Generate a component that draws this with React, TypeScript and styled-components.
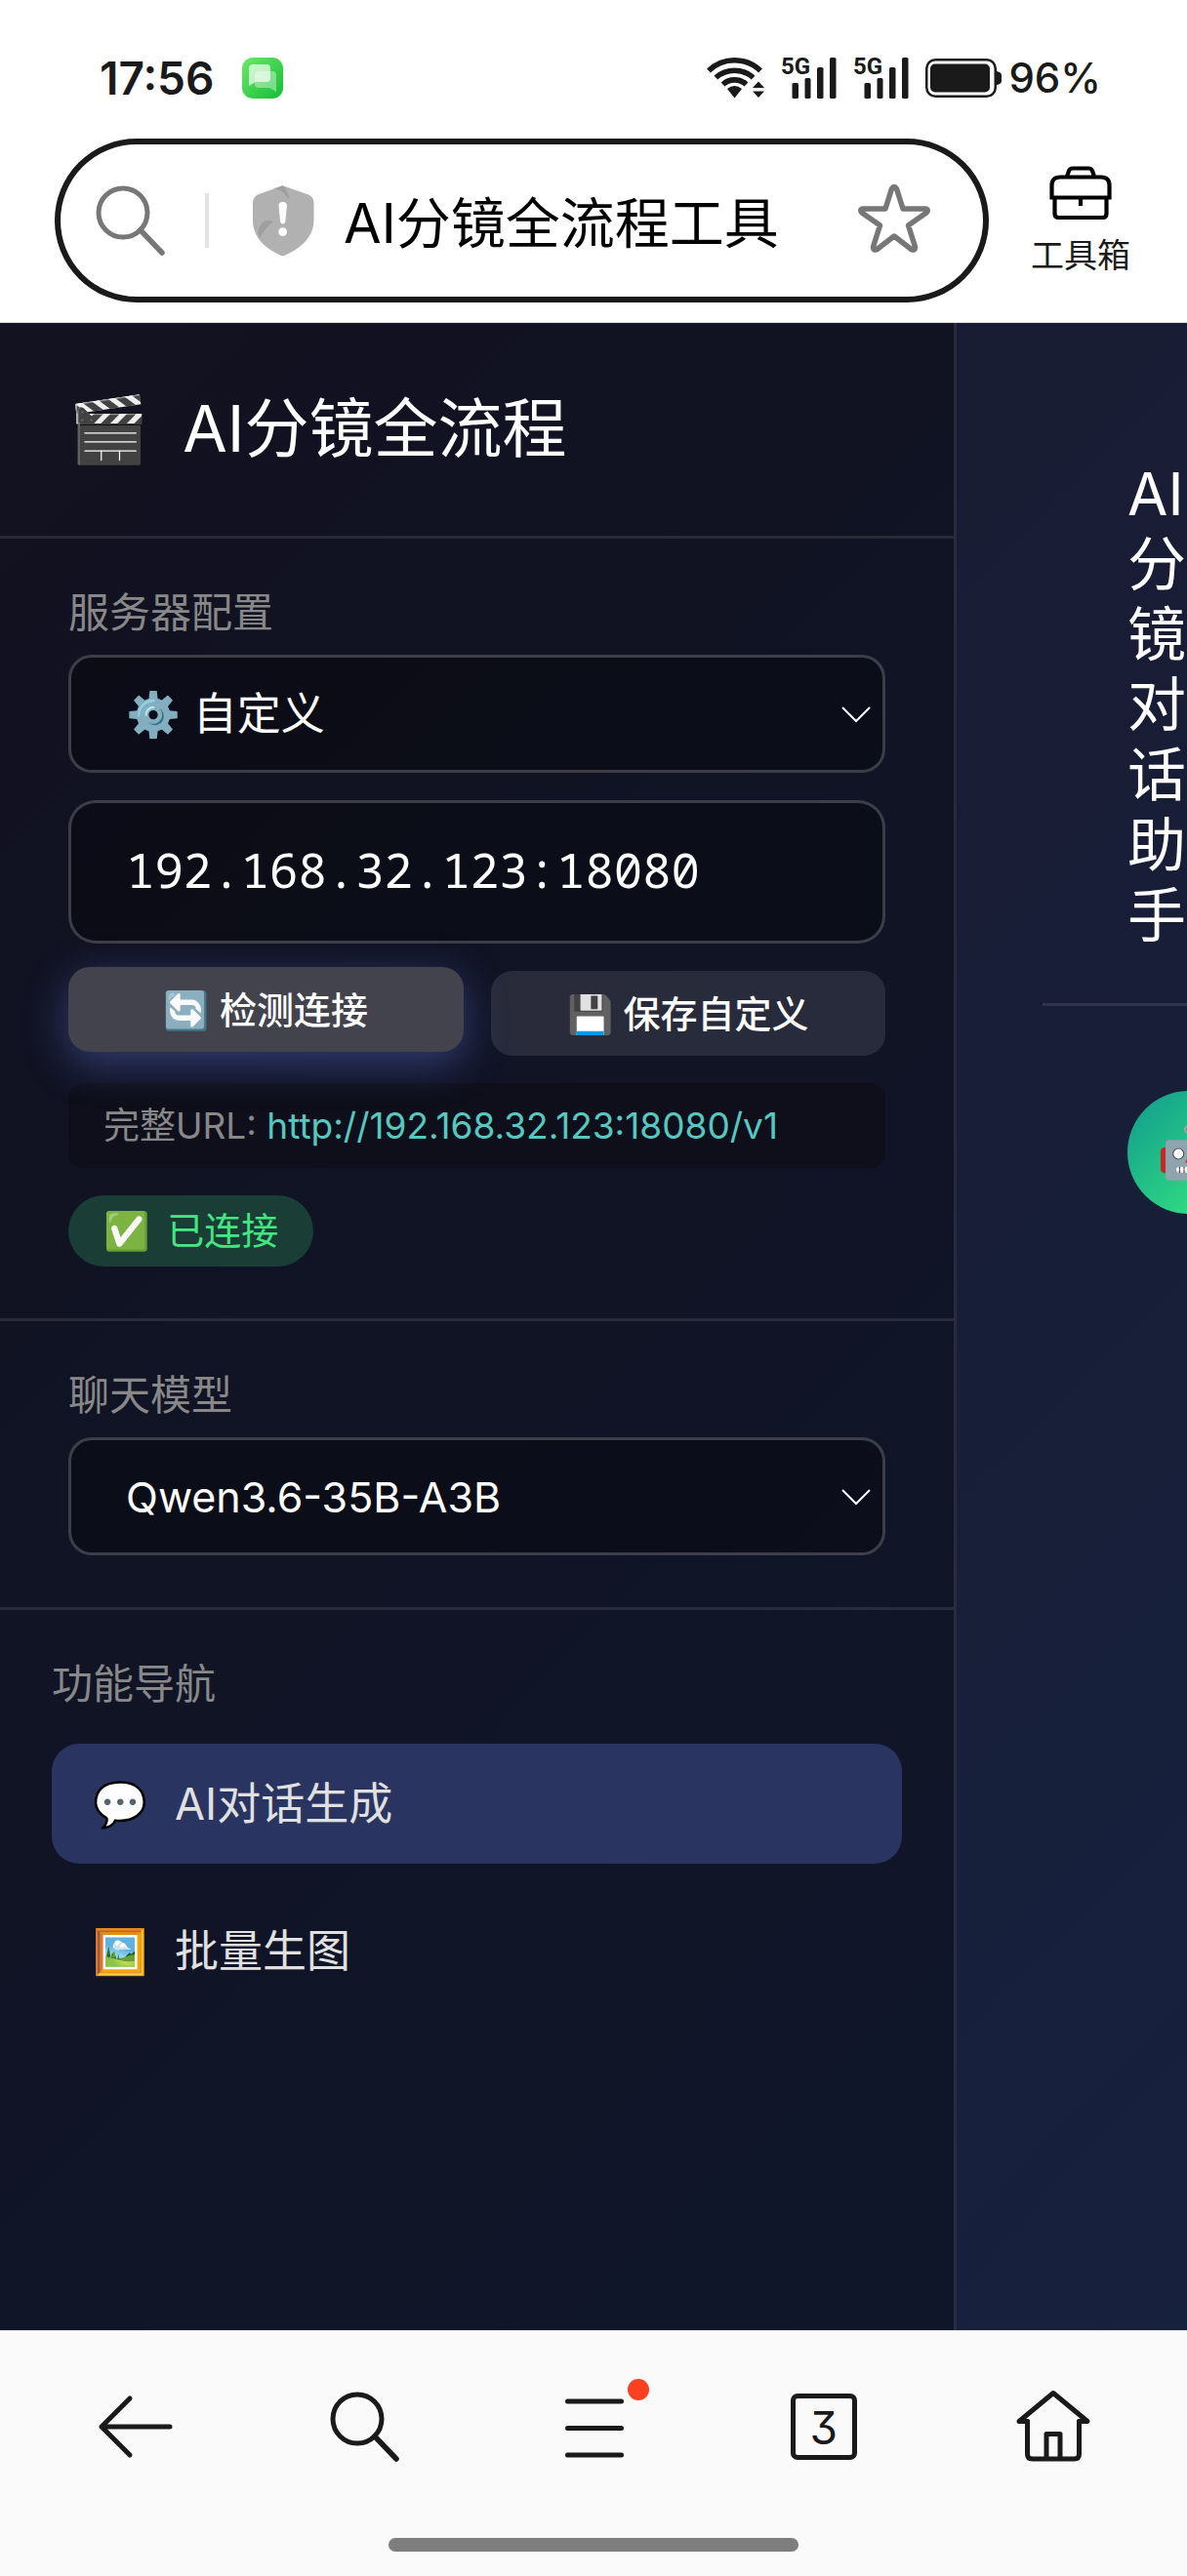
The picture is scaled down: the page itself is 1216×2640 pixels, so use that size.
import React, { useState } from "react";
import styled, { createGlobalStyle, css } from "styled-components";

const sans = `Inter, "Noto Sans CJK SC", "Noto Color Emoji", sans-serif`;
const mono = `"Noto Sans Mono", "DejaVu Sans Mono", monospace`;

const GlobalStyle = createGlobalStyle`
  *, *::before, *::after { box-sizing: border-box; }
  body { margin: 0; background: #fff; font-family: ${sans}; }
  button, input, select { font: inherit; color: inherit; margin: 0; }
  button { border: 0; background: none; padding: 0; cursor: pointer; }
  a { text-decoration: none; }
  h1, h2, p { margin: 0; font-weight: 400; }
  svg { display: block; flex: none; overflow: visible; }
`;

const Screen = styled.div`
  display: flex;
  flex-direction: column;
  min-height: 100vh;
`;

/* ---------- status bar ---------- */

const StatusBar = styled.div`
  display: flex;
  align-items: center;
  justify-content: space-between;
  padding: 44px 88px 26px 102px;
  line-height: 72px;
  color: #1a1a1a;
`;

const StatusGroup = styled.div<{ $gap: number }>`
  display: flex;
  align-items: center;
  gap: ${p => p.$gap}px;
`;

const Clock = styled.time`
  font-size: 46px;
  font-weight: 600;
`;

const BatteryLevel = styled.span`
  font-size: 42px;
  font-weight: 500;
`;

const SignalLabel = styled.text`
  font: 700 24px "Liberation Sans Narrow", Roboto, sans-serif;
  fill: #1a1a1a;
`;

/* ---------- address bar ---------- */

const AddressRow = styled.header`
  display: flex;
  align-items: center;
  gap: 43px;
  padding: 0 58px 20px 56px;
  border-bottom: 1px solid #dcdce0;
`;

const AddressBar = styled.div`
  flex: 1;
  min-width: 0;
  display: flex;
  align-items: center;
  height: 168px;
  padding: 0 54px 0 36px;
  border: 6px solid #1a1a1a;
  border-radius: 84px;
`;

const Divider = styled.span`
  width: 4px;
  height: 56px;
  margin: 0 44px 0 40px;
  background: #e4e4e4;
`;

const AddressInput = styled.input`
  flex: 1;
  min-width: 0;
  height: 84px;
  margin: 0 24px 0 30px;
  padding: 0 0 4px;
  border: 0;
  outline: 0;
  background: none;
  color: #000;
  font-size: 56px;
`;

const Toolbox = styled.button`
  display: flex;
  flex-direction: column;
  align-items: center;
  gap: 16px;
  color: #1a1a1a;
  font-size: 34px;
  line-height: 40px;
`;

/* ---------- web page ---------- */

const Page = styled.div`
  flex: 1;
  display: flex;
  overflow: hidden;
  background: linear-gradient(135deg, #1a1a2e 0%, #16213e 100%);
  color: #fff;
`;

const Sidebar = styled.aside`
  flex: none;
  width: 980px;
  border-right: 3px solid rgba(255, 255, 255, 0.1);
  background: rgba(0, 0, 0, 0.3);
`;

const Brand = styled.div`
  display: flex;
  align-items: center;
  gap: 35px;
  padding: 51px 70px 53px;
  border-bottom: 3px solid rgba(255, 255, 255, 0.1);
  font-size: 66px;
  line-height: 114px;
`;

const BrandTitle = styled.h1`
  font-size: inherit;
`;

const Section = styled.section`
  display: flex;
  flex-direction: column;
  gap: 28px;
  padding: 52px 70px 53px;
  border-bottom: 3px solid rgba(255, 255, 255, 0.1);
`;

const labelText = css`
  color: #888;
  font-size: 42px;
  line-height: 48px;
`;

const Field = styled.div`
  display: flex;
  flex-direction: column;
  gap: 19px;
`;

const FieldLabel = styled.label`
  ${labelText}
`;

const controlBox = css`
  width: 100%;
  border: 3px solid rgba(255, 255, 255, 0.2);
  background: rgba(0, 0, 0, 0.3);
  color: #fff;
  outline: 0;
`;

const SelectBox = styled.div`
  display: grid;
  align-items: center;
  & > * { grid-area: 1 / 1; }
  & > svg { justify-self: end; margin-right: 15px; pointer-events: none; }
`;

const Select = styled.select<{ $size: number }>`
  ${controlBox}
  appearance: none;
  height: 121px;
  padding: 0 56px;
  border-radius: 24px;
  font-size: ${p => p.$size}px;
  option { color: #fff; background: #111322; }
`;

const ServerInput = styled.input`
  ${controlBox}
  height: 147px;
  padding: 0 56px 5px;
  border-radius: 28px;
  font-family: ${mono};
  font-size: 49px;
`;

const ButtonRow = styled.div`
  display: grid;
  grid-template-columns: 1fr 1fr;
  gap: 28px;
`;

const ActionButton = styled.button<{ $raised?: boolean }>`
  height: 87px;
  padding-bottom: 5px;
  border-radius: 22px;
  background: rgba(255, 255, 255, 0.1);
  font-size: 38px;
  font-weight: 500;
  ${p => p.$raised && css`
    background: #43434e;
    transform: translateY(-4px);
    box-shadow: 0 12px 44px rgba(102, 126, 234, 0.4);
  `}
`;

const UrlPreview = styled.p`
  padding: 0 36px;
  border-radius: 16px;
  background: #0e0f1a;
  color: #888;
  font-size: 37px;
  line-height: 87px;
  white-space: nowrap;
  a { color: #56c8c0; }
`;

const ConnectionBadge = styled.div`
  align-self: flex-start;
  display: flex;
  gap: 18px;
  padding: 0 36px;
  border-radius: 37px;
  background: #1a3e36;
  color: #43e681;
  font-size: 38px;
  line-height: 73px;
`;

const NavSection = styled.nav`
  display: flex;
  flex-direction: column;
  gap: 28px;
  padding: 52px 53px;
`;

const NavHeading = styled.h2`
  ${labelText}
  margin-bottom: 9px;
`;

const NavItem = styled.a<{ $active?: boolean }>`
  display: flex;
  align-items: center;
  gap: 28px;
  padding: 0 42px;
  border-radius: 28px;
  background: ${p => (p.$active ? "#2a3460" : "transparent")};
  color: #e0e0e0;
  font-size: 45px;
  line-height: 123px;
`;

const Main = styled.main`
  flex: 1 0 480px;
  padding: 139px 88px 0;
`;

const ChatHeader = styled.div`
  padding: 0 87px 54px;
  border-bottom: 3px solid rgba(255, 255, 255, 0.1);
`;

const ChatTitle = styled.h2`
  width: min-content;
  font-size: 60px;
  line-height: 72px;
`;

const ChatLog = styled.div`
  padding: 87px;
`;

const Avatar = styled.div`
  display: grid;
  place-items: center;
  width: 126px;
  height: 126px;
  border-radius: 50%;
  background: linear-gradient(135deg, #11998e, #38ef7d);
  font-size: 52px;
  line-height: 64px;
`;

/* ---------- browser toolbar ---------- */

const BottomBar = styled.footer`
  display: flex;
  flex-direction: column;
  align-items: center;
  border-top: 1px solid #dcdce0;
  background: #fafafa;
  color: #1a1a1a;
`;

const Toolbar = styled.nav`
  display: grid;
  grid-template-columns: repeat(5, 1fr);
  width: 100%;
  height: 196px;
  padding: 0 20px 0 22px;
`;

const ToolButton = styled.button`
  display: flex;
  align-items: center;
  justify-content: center;
`;

const MenuGlyph = styled.span`
  position: relative;
`;

const Dot = styled.span`
  position: absolute;
  top: -18px;
  right: -26px;
  width: 22px;
  height: 22px;
  border-radius: 50%;
  background: #ff4020;
`;

const TabCount = styled.span`
  width: 68px;
  height: 68px;
  border: 5px solid #1a1a1a;
  border-radius: 7px;
  font-size: 46px;
  line-height: 60px;
  font-feature-settings: "cv09";
`;

const HomeIndicator = styled.div`
  width: 420px;
  height: 14px;
  margin: 16px 0 25px;
  border-radius: 7px;
  background: #7e7e7e;
`;

/* ---------- icons ---------- */

const MessageAppIcon = () => (
  <svg width="44" height="44" viewBox="0 0 44 44">
    <defs>
      <linearGradient id="app" x1="0" y1="0" x2="1" y2="1">
        <stop offset="0" stopColor="#6fe86a" />
        <stop offset="1" stopColor="#12bd35" />
      </linearGradient>
    </defs>
    <rect x="1" y="1" width="42" height="42" rx="11" fill="url(#app)" />
    <path d="M14 19a4 4 0 0 1 4-4h14a4 4 0 0 1 4 4v17l-7-4H18a4 4 0 0 1-4-4z" fill="#fff" opacity=".38" />
    <path d="M8 12a4 4 0 0 1 4-4h14a4 4 0 0 1 4 4v10a4 4 0 0 1-4 4H15l-7 4z" fill="#fff" opacity=".68" />
  </svg>
);

const WifiIcon = () => (
  <svg width="60" height="44" viewBox="0 0 60 44" fill="none" stroke="#1a1a1a" strokeWidth="5.6">
    <path d="M2 14.5A38 38 0 0 1 55 14.5" />
    <path d="M9.300 21.500A29 29 0 0 1 47.700 21.500" />
    <path d="M16.500 28.500A18 18 0 0 1 40.500 28.500" />
    <g fill="#1a1a1a" stroke="none">
      <path d="M21 33q7.500-6 15 0l-7.500 9.500z" />
      <path d="M53 25.500l6 6.500H47zM47 35.500h12l-6 6.500z" />
    </g>
  </svg>
);

const SignalIcon = () => (
  <svg width="58" height="44" viewBox="0 0 58 44" fill="#1a1a1a">
    <SignalLabel x="0" y="18">5G</SignalLabel>
    <rect x="11.500" y="27" width="6.500" height="16" rx="1.500" />
    <rect x="24.500" y="22" width="6" height="21" rx="1.500" />
    <rect x="37" y="11" width="6.500" height="32" rx="1.500" />
    <rect x="50" y="1" width="6.500" height="42" rx="1.500" />
  </svg>
);

const BatteryIcon = () => (
  <svg width="80" height="40" viewBox="0 0 80 40">
    <rect x="1.250" y="1.250" width="70.500" height="37.500" rx="9" fill="none" stroke="#1a1a1a" strokeWidth="2.500" />
    <rect x="5" y="5.500" width="61" height="29" rx="5" fill="#1a1a1a" />
    <path d="M73 13q5 1 5 4v6q0 3-5 4z" fill="#1a1a1a" />
  </svg>
);

const SearchIcon = ({ color }: { color: string }) => (
  <svg width="72" height="72" viewBox="0 0 72 72" fill="none" stroke={color} strokeWidth="5" strokeLinecap="round">
    <circle cx="28" cy="28" r="25" />
    <path d="M46 46L68 69" strokeWidth="5.500" />
  </svg>
);

const ShieldIcon = () => (
  <svg width="64" height="74" viewBox="0 0 64 74">
    <path d="M31.700 1.200L58 10.500Q63.500 13 63.500 19V37C63.500 55 48 67 31.700 73.500C15 67 1 55 1 37V19Q1 13 6 10.500Z" fill="#b1b1b1" />
    <path d="M31.700 1.200L22 4.600Q32 5 38 16Q38 7 31.700 1.200ZM8 55Q3 47 12 38Q16 36 22 38Q14 44 8 55Z" fill="#9f9f9f" />
    <path d="M27.500 21.500q0-3.500 4.200-3.500t4.200 3.500l-1.500 16q-.4 3-2.700 3t-2.700-3z" fill="#fff" />
    <circle cx="31.700" cy="48.700" r="4.400" fill="#fff" />
  </svg>
);

const StarIcon = () => (
  <svg width="74" height="76" viewBox="0 0 74 76" fill="none" stroke="#777" strokeWidth="5.500" strokeLinejoin="round">
    <path d="M34.500 5.500Q37 1.500 39.500 5.500L46 26H69Q73 27 70 30L51.500 43L58.500 65Q58.500 69.500 54.500 67.500L37 54L19.500 67.500Q15.500 69.500 15.500 65L22.500 43L4 30Q1 27 5 26H28Z" />
  </svg>
);

const ToolboxIcon = () => (
  <svg width="64" height="56" viewBox="0 0 64 56" fill="none" stroke="#000" strokeWidth="4.200">
    <path d="M2.500 32.500V20Q2.500 11.500 11 11.500H53Q61.500 11.500 61.500 20V32.500Z" />
    <path d="M5.500 32V49Q5.500 53 9.500 53H54.500Q58.500 53 58.500 49V32" />
    <path d="M18 11L20 5Q21 2.500 24 2.500H40Q43 2.500 44 5L46 11M32 33V41" />
  </svg>
);

const ChevronIcon = () => (
  <svg width="30" height="16" viewBox="0 0 30 16" fill="none" stroke="#fff" strokeWidth="2">
    <path d="M1 1L15 15L29 1" />
  </svg>
);

const BackIcon = () => (
  <svg width="76" height="64" viewBox="0 0 76 64" fill="none" stroke="#1a1a1a" strokeWidth="5" strokeLinecap="round" strokeLinejoin="round">
    <path d="M32 3L3 32L32 61M3 32H73" />
  </svg>
);

const MenuIcon = () => (
  <svg width="60" height="62" viewBox="0 0 60 62" stroke="#1a1a1a" strokeWidth="5" strokeLinecap="round">
    <path d="M2.500 5H57.500M2.500 32.500H57.500M2.500 60H57.500" />
  </svg>
);

const HomeIcon = () => (
  <svg width="76" height="76" viewBox="0 0 76 76" fill="none" stroke="#1a1a1a" strokeWidth="5" strokeLinecap="round" strokeLinejoin="round">
    <path d="M11.500 32.500H3L38 3.500L73 32.500H64.500" />
    <path d="M11.500 32.500V66Q11.500 71 16.500 71H59.500Q64.500 71 64.500 66V32.500M31 70V45.500H45V70" />
  </svg>
);

const navItems = [
  { icon: "💬", text: "AI对话生成", href: "#chat" },
  { icon: "🖼️", text: "批量生图", href: "#batch" },
];

export default function App() {
  const [active, setActive] = useState("#chat");
  const [server, setServer] = useState("192.168.32.123:18080");
  const url = `http://${server}/v1`;

  return (
    <Screen>
      <GlobalStyle />
      <StatusBar>
        <StatusGroup $gap={28}>
          <Clock>17:56</Clock>
          <MessageAppIcon />
        </StatusGroup>
        <StatusGroup $gap={16}>
          <WifiIcon />
          <SignalIcon />
          <SignalIcon />
          <StatusGroup $gap={5}>
            <BatteryIcon />
            <BatteryLevel>96%</BatteryLevel>
          </StatusGroup>
        </StatusGroup>
      </StatusBar>

      <AddressRow>
        <AddressBar>
          <SearchIcon color="#777" />
          <Divider />
          <ShieldIcon />
          <AddressInput aria-label="地址栏" defaultValue="AI分镜全流程工具" />
          <button type="button" aria-label="收藏"><StarIcon /></button>
        </AddressBar>
        <Toolbox type="button">
          <ToolboxIcon />
          工具箱
        </Toolbox>
      </AddressRow>

      <Page>
        <Sidebar>
          <Brand>
            <span>🎬</span>
            <BrandTitle>AI分镜全流程</BrandTitle>
          </Brand>

          <Section>
            <Field>
              <FieldLabel htmlFor="preset">服务器配置</FieldLabel>
              <SelectBox>
                <Select id="preset" $size={45}>
                  <option>⚙️ 自定义</option>
                </Select>
                <ChevronIcon />
              </SelectBox>
            </Field>
            <ServerInput aria-label="服务器地址" value={server} onChange={e => setServer(e.target.value)} />
            <ButtonRow>
              <ActionButton type="button" $raised>🔄 检测连接</ActionButton>
              <ActionButton type="button">💾 保存自定义</ActionButton>
            </ButtonRow>
            <UrlPreview>完整URL: <a href={url}>{url}</a></UrlPreview>
            <ConnectionBadge role="status">
              <span>✅</span>
              <span>已连接</span>
            </ConnectionBadge>
          </Section>

          <Section>
            <Field>
              <FieldLabel htmlFor="model">聊天模型</FieldLabel>
              <SelectBox>
                <Select id="model" $size={43}>
                  <option>Qwen3.6-35B-A3B</option>
                </Select>
                <ChevronIcon />
              </SelectBox>
            </Field>
          </Section>

          <NavSection>
            <NavHeading>功能导航</NavHeading>
            {navItems.map(item => (
              <NavItem key={item.href} href={item.href} $active={item.href === active} onClick={() => setActive(item.href)}>
                <span>{item.icon}</span>
                <span>{item.text}</span>
              </NavItem>
            ))}
          </NavSection>
        </Sidebar>

        <Main>
          <ChatHeader>
            <ChatTitle>AI分镜对话助手</ChatTitle>
          </ChatHeader>
          <ChatLog>
            <Avatar>🤖</Avatar>
          </ChatLog>
        </Main>
      </Page>

      <BottomBar>
        <Toolbar>
          <ToolButton type="button" aria-label="返回"><BackIcon /></ToolButton>
          <ToolButton type="button" aria-label="搜索"><SearchIcon color="#1a1a1a" /></ToolButton>
          <ToolButton type="button" aria-label="菜单">
            <MenuGlyph><MenuIcon /><Dot /></MenuGlyph>
          </ToolButton>
          <ToolButton type="button" aria-label="标签页"><TabCount>3</TabCount></ToolButton>
          <ToolButton type="button" aria-label="主页"><HomeIcon /></ToolButton>
        </Toolbar>
        <HomeIndicator />
      </BottomBar>
    </Screen>
  );
}
